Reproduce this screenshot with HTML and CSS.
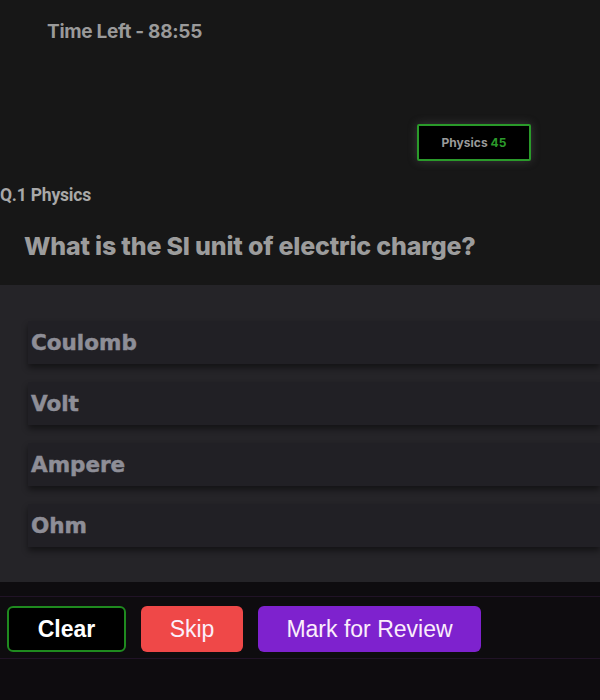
FILE: index.html
```html
<!DOCTYPE html>
<html>
<head>
<meta charset="utf-8">
<link rel="stylesheet" href="styles.css">
</head>
<body>
<div class="page">
  <section class="top">
    <div class="timer">Time Left - 88:55</div>
    <div class="badge-row">
      <div class="badge">Physics <span class="count">45</span></div>
    </div>
    <div class="qnum">Q.1 Physics</div>
    <h1 class="question">What is the SI unit of electric charge?</h1>
  </section>
  <section class="options">
    <div class="option">Coulomb</div>
    <div class="option">Volt</div>
    <div class="option">Ampere</div>
    <div class="option">Ohm</div>
  </section>
  <section class="bottom">
    <div class="actions">
      <button class="btn btn-clear">Clear</button>
      <button class="btn btn-skip">Skip</button>
      <button class="btn btn-review">Mark for Review</button>
    </div>
  </section>
</div>
</body>
</html>
```
FILE: styles.css
```css
* { box-sizing: border-box; }
html, body { margin: 0; padding: 0; }
body {
  width: 600px;
  height: 700px;
  overflow: hidden;
  background: #0e0c0f;
  font-family: Roboto, "Liberation Sans", sans-serif;
}
.page { display: flex; flex-direction: column; height: 700px; }

.top {
  height: 285px;
  background: #171717;
  padding-top: 20px;
}
.timer {
  margin-left: 47px;
  font-size: 19px;
  line-height: 24px;
  font-weight: 700;
  color: #9a9a9a;
  font-family: Inter, Roboto, sans-serif;
  letter-spacing: -0.3px;
}
.badge-row {
  display: flex;
  justify-content: flex-end;
  padding-right: 69px;
  margin-top: 80px;
}
.badge {
  width: 114px;
  height: 37px;
  border: 2px solid #2a9a2a;
  border-radius: 2px;
  background: #000;
  box-shadow: 0 0 10px rgba(120, 120, 120, 0.35);
  display: flex;
  align-items: center;
  justify-content: center;
  font-family: Inter, Roboto, sans-serif;
  font-size: 12px;
  font-weight: 700;
  color: #9a9a9a;
}
.badge .count { color: #2b9a2b; margin-left: 3px; }
.qnum {
  margin-top: 24px;
  font-size: 17.5px;
  line-height: 20px;
  font-weight: 700;
  color: #a8a8a8;
  letter-spacing: -0.2px;
}
.question {
  margin: 26px 0 0 24px;
  font-family: Inter, Roboto, sans-serif;
  font-size: 25px;
  line-height: 30px;
  font-weight: 800;
  color: #9c9c9c;
  letter-spacing: -0.2px;
}

.options {
  height: 297px;
  background: #252428;
  padding: 36px 0 0 28px;
  display: flex;
  flex-direction: column;
  gap: 18px;
}
.option {
  height: 43px;
  background: #212025;
  box-shadow: 0 4px 6px rgba(0, 0, 0, 0.45);
  display: flex;
  align-items: center;
  padding-left: 3px;
  font-family: "DejaVu Sans", sans-serif;
  font-weight: 700;
  font-size: 21.5px;
  -webkit-text-stroke: 0.5px #8e8e97;
  color: #8e8e97;
}

.bottom {
  flex: 1;
  background: #0e0c0f;
  padding-top: 14px;
}
.actions {
  display: flex;
  gap: 15px;
  padding: 9px 7px 6px;
  border-top: 1px solid rgba(90, 40, 110, 0.25);
  border-bottom: 1px solid rgba(90, 40, 110, 0.25);
}
.btn {
  height: 46px;
  border-radius: 6px;
  font-family: "Liberation Sans", Arial, sans-serif;
  font-size: 23px;
  color: #fbeefb;
  border: none;
  padding: 0;
}
.btn-clear {
  width: 119px;
  background: #000;
  border: 2px solid #1f8a1f;
  font-weight: 700;
  color: #fff;
}
.btn-skip { width: 102px; background: #ef4848; }
.btn-review { width: 223px; background: #7e22ce; }
```
